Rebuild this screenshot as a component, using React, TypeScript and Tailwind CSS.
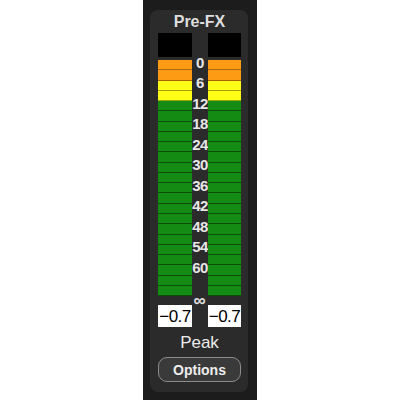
const labels = ['0', '6', '12', '18', '24', '30', '36', '42', '48', '54', '60'];

const segments = [
  ...Array(2).fill('orange'),
  ...Array(2).fill('yellow'),
  ...Array(19).fill('green'),
];

function Segments() {
  return (
    <div className="flex h-[236px] flex-col">
      {segments.map((c, i) => (
        <div
          key={i}
          className={
            c === 'orange'
              ? 'flex-1 border-b border-[#a8650c] bg-[#fd9c14]'
              : c === 'yellow'
                ? 'flex-1 border-b border-[#a3a30a] bg-[#fdfd17]'
                : 'flex-1 border-b border-[#0b4f0b] bg-[#148b13]'
          }
        />
      ))}
    </div>
  );
}

function Meter({ width }: { width: string }) {
  return (
    <div className={`${width} flex flex-col`}>
      <div className="h-[24px] bg-black" />
      <div className="h-[3px]" />
      <Segments />
    </div>
  );
}

export default function App() {
  return (
    <div className="h-[400px] w-[400px] bg-white font-['Liberation_Sans',Arial,sans-serif]">
      <div className="ml-[143px] h-[400px] w-[114px] bg-[#1c1c1c] pb-[8px] pl-[7px] pr-[9px] pt-[10px]">
        <div className="flex h-full flex-col rounded-lg bg-[#2b2b2b] pl-[8px] pr-[7px]">
          <div className="h-[23px] text-center text-[16px] font-bold leading-[23px] text-[#dedede]">
            Pre-FX
          </div>

          <div className="flex">
            <Meter width="w-[34px]" />
            <div className="flex w-[16px] flex-col pt-[19px]">
              {labels.map((l) => (
                <div
                  key={l}
                  className="flex h-[20.5px] items-center justify-center whitespace-nowrap text-[15px] font-bold leading-none tracking-[-0.5px] text-[#e6e6e6]"
                >
                  {l}
                </div>
              ))}
            </div>
            <Meter width="w-[33px]" />
          </div>

          <div className="flex h-[9px] items-center justify-center text-[17px] font-bold leading-none text-[#e0e0e0]">
            ∞
          </div>

          <div className="flex gap-[16px]">
            <div className="flex h-[22px] w-[34px] items-center justify-center bg-white text-[17px] leading-none tracking-[-0.5px] text-black">
              −0.7
            </div>
            <div className="flex h-[22px] w-[33px] items-center justify-center bg-white text-[17px] leading-none tracking-[-0.5px] text-black">
              −0.7
            </div>
          </div>

          <div className="mt-[6px] text-center text-[17px] leading-[20px] text-[#ececec]">
            Peak
          </div>

          <button className="mt-[4px] h-[25px] w-[83px] rounded-[9px] border-[1.5px] border-[#8c8c8c] bg-[#3a3a3a] text-[14px] font-bold leading-none text-[#ededed]">
            Options
          </button>
        </div>
      </div>
    </div>
  );
}
